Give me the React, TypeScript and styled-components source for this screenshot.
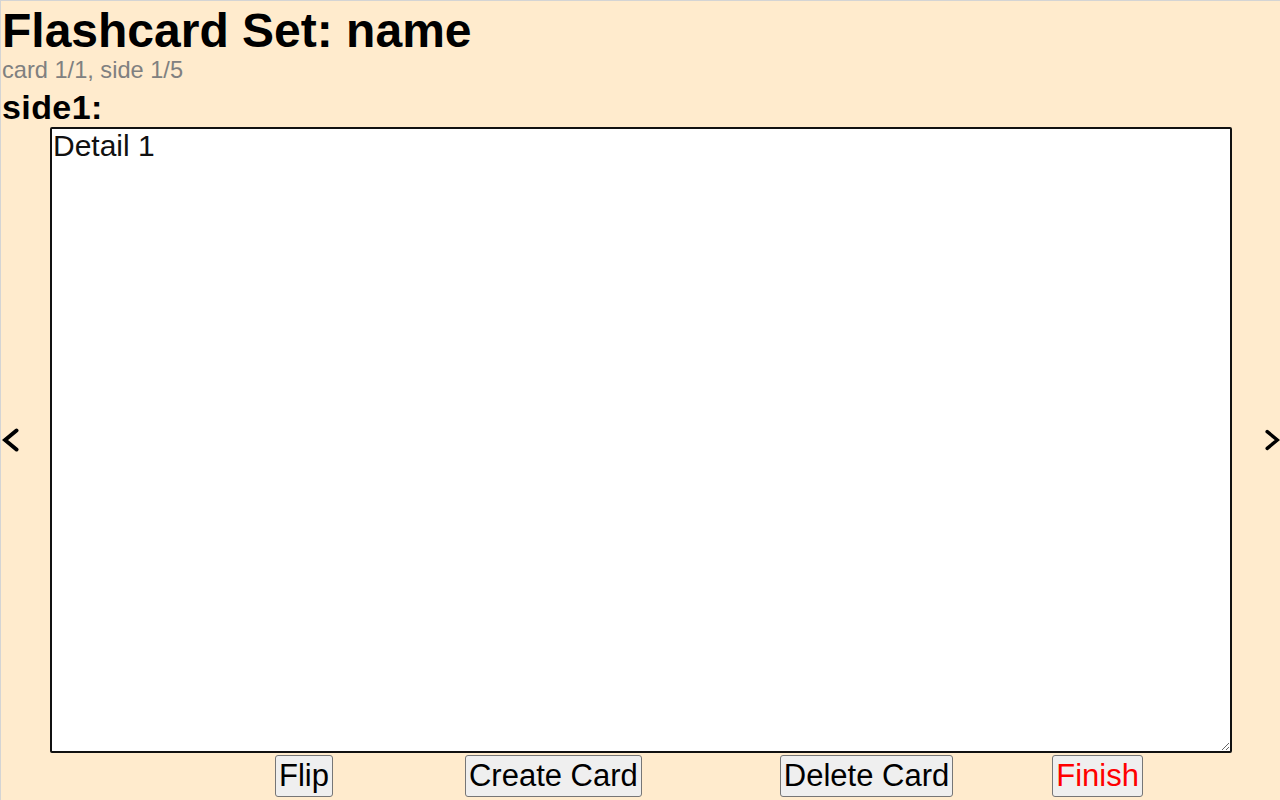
import { useEffect, useRef, useState } from "react";
import styled, { createGlobalStyle } from "styled-components";

const GlobalStyle = createGlobalStyle`
    html {
        background: #ffebcd;
    }
    body {
        margin: 0;
        min-height: 800px;
        box-sizing: border-box;
        overflow: hidden;
        border-top: 1px solid #d4d4d4;
        border-left: 1px solid #d4d4d4;
        background: #ffebcd;
        font-family: "Liberation Sans", Arial, sans-serif;
        color: #000;
    }
`;

const Page = styled.div`
    display: flex;
    flex-direction: column;
    padding: 2px 0 0 1px;
`;
const Title = styled.h1`
    margin: 0;
    font-size: 48px;
    line-height: 55px;
    font-weight: bold;
`;
const Progress = styled.div`
    font-size: 23.6px;
    line-height: 24px;
    color: #808080;
`;
const SideLabel = styled.div`
    margin-top: 5px;
    font-size: 34px;
    line-height: 40px;
    font-weight: bold;
    letter-spacing: 0.4px;
`;
const Workspace = styled.div`
    display: flex;
    align-items: center;
`;
const ArrowCell = styled.div<{ $right?: boolean }>`
    width: 48px;
    flex: ${props => props.$right ? "1" : "none"};
    min-width: 0;
    overflow: hidden;
    display: flex;
    align-items: center;
    padding-left: ${props => props.$right ? "33px" : "0"};
    cursor: pointer;
`;
const Editor = styled.textarea`
    width: 1182px;
    height: 626px;
    box-sizing: border-box;
    margin: 0;
    padding: 0 1px;
    border: 2px solid #111;
    border-radius: 2px;
    outline: none;
    background: #fff;
    font-family: "Liberation Sans", Arial, sans-serif;
    font-size: 30px;
    color: #111;
    caret-color: #000;
`;
const Toolbar = styled.div`
    display: flex;
    margin-top: 2px;
    padding-left: 273px;
`;
const Button = styled.button<{ $space?: number; $danger?: boolean }>`
    margin: 0 0 0 ${props => props.$space ?? 0}px;
    padding: 2px 3px;
    border: 1px solid #767676;
    border-radius: 3px;
    background: #efefef;
    font-family: "Liberation Sans", Arial, sans-serif;
    font-size: 31px;
    color: ${props => props.$danger ? "#ff0000" : "#000"};
    cursor: pointer;
`;

const Chevron = ({ dir }: { dir: "left" | "right" }) => (
    <svg width="17" height="26" viewBox="0 0 17 26">
        <polyline
            points={dir === "left" ? "14.5,3.5 3,13 14.5,22.5" : "2.5,3.5 14,13 2.5,22.5"}
            fill="none"
            stroke="#000"
            strokeWidth="4"
            strokeLinecap="round"
            strokeLinejoin="miter"
        />
    </svg>
);

export default function App() {
    const [text, setText] = useState("Detail 1");
    const ref = useRef<HTMLTextAreaElement>(null);
    useEffect(() => {
        const el = ref.current;
        if (!el) return;
        el.focus();
        el.setSelectionRange(el.value.length, el.value.length);
    }, []);
    return <Page>
        <GlobalStyle />
        <Title>Flashcard Set: name</Title>
        <Progress>card 1/1, side 1/5</Progress>
        <SideLabel>side1:</SideLabel>
        <Workspace>
            <ArrowCell><Chevron dir="left" /></ArrowCell>
            <Editor ref={ref} value={text} onChange={e => setText(e.target.value)} />
            <ArrowCell $right><Chevron dir="right" /></ArrowCell>
        </Workspace>
        <Toolbar>
            <Button>Flip</Button>
            <Button $space={132}>Create Card</Button>
            <Button $space={138}>Delete Card</Button>
            <Button $space={99} $danger>Finish</Button>
        </Toolbar>
    </Page>
}
